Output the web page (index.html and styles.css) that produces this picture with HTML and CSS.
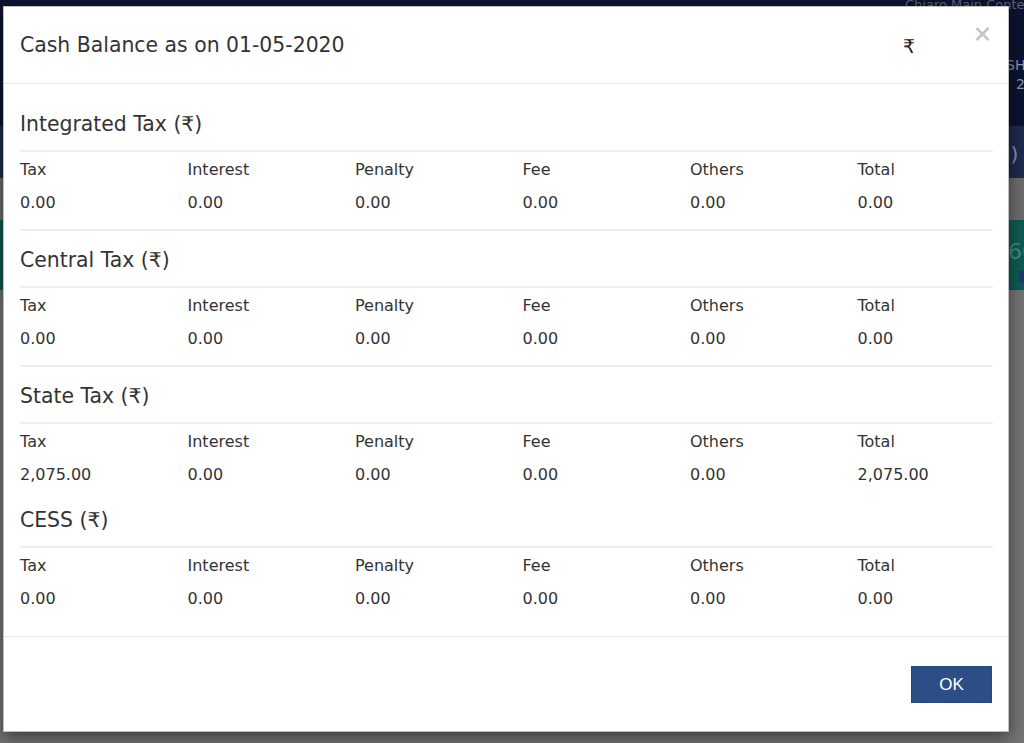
FILE: index.html
```html
<!DOCTYPE html>
<html>
<head>
<meta charset="utf-8">
<title>Cash Balance</title>
<link rel="stylesheet" href="styles.css">
</head>
<body>
<div class="page">
  <div class="bg-top">
    <div class="bg-line bg-faint">Chiaro Main Content</div>
    <div class="bg-line bg-sh">SHAH</div>
    <div class="bg-line bg-two">2020</div>
  </div>
  <div class="bg-band"><span class="bg-line bg-l">l)</span></div>
  <div class="bg-grey"></div>
  <div class="bg-teal"><span class="bg-line bg-six">60</span><span class="bg-chip"></span></div>
  <div class="bg-rest"></div>
</div>

<div class="modal">
  <div class="modal-header">
    <h4 class="modal-title">Cash Balance as on 01-05-2020</h4>
    <span class="rupee">₹</span>
    <button class="close" aria-label="Close">
      <svg width="15" height="14" viewBox="0 0 15 14"><path d="M1.5 1 L13.5 13 M13.5 1 L1.5 13" stroke="#c6c6c6" stroke-width="2.6" stroke-linecap="butt"/></svg>
    </button>
  </div>
  <div class="modal-body">
    <section class="tax">
      <h5 class="tax-title">Integrated Tax (₹)</h5>
      <div class="rule"></div>
      <div class="grid labels"><span>Tax</span><span>Interest</span><span>Penalty</span><span>Fee</span><span>Others</span><span>Total</span></div>
      <div class="grid values"><span>0.00</span><span>0.00</span><span>0.00</span><span>0.00</span><span>0.00</span><span>0.00</span></div>
      <div class="rule rule-end"></div>
    </section>
    <section class="tax">
      <h5 class="tax-title">Central Tax (₹)</h5>
      <div class="rule"></div>
      <div class="grid labels"><span>Tax</span><span>Interest</span><span>Penalty</span><span>Fee</span><span>Others</span><span>Total</span></div>
      <div class="grid values"><span>0.00</span><span>0.00</span><span>0.00</span><span>0.00</span><span>0.00</span><span>0.00</span></div>
      <div class="rule rule-end"></div>
    </section>
    <section class="tax tax-open">
      <h5 class="tax-title">State Tax (₹)</h5>
      <div class="rule"></div>
      <div class="grid labels"><span>Tax</span><span>Interest</span><span>Penalty</span><span>Fee</span><span>Others</span><span>Total</span></div>
      <div class="grid values"><span>2,075.00</span><span>0.00</span><span>0.00</span><span>0.00</span><span>0.00</span><span>2,075.00</span></div>
    </section>
    <section class="tax tax-last">
      <h5 class="tax-title">CESS (₹)</h5>
      <div class="rule"></div>
      <div class="grid labels"><span>Tax</span><span>Interest</span><span>Penalty</span><span>Fee</span><span>Others</span><span>Total</span></div>
      <div class="grid values"><span>0.00</span><span>0.00</span><span>0.00</span><span>0.00</span><span>0.00</span><span>0.00</span></div>
    </section>
  </div>
  <div class="modal-footer">
    <button class="btn-ok">OK</button>
  </div>
</div>
</body>
</html>
```

FILE: styles.css
```css
* { box-sizing: border-box; }
html, body { margin: 0; padding: 0; }
body {
  width: 1024px;
  height: 743px;
  overflow: hidden;
  background: #727272;
  font-family: "DejaVu Sans", Verdana, sans-serif;
  color: #333;
  position: relative;
}

/* background page (dimmed by overlay) */
.page { width: 1024px; }
.bg-top { height: 128px; background: #0c1330; }
.bg-band { height: 52px; background: #1d2b4b; padding-top: 18px; }
.bg-grey { height: 42px; background: #6c6c6c; }
.bg-teal { height: 70px; background: #0e5b54; padding-top: 20px; position: relative; }
.bg-rest { height: 451px; background: #747474; }
.bg-line { display: block; white-space: nowrap; overflow: hidden; }
.bg-faint { color: #5d6478; font-size: 13px; line-height: 14px; padding-left: 905px; margin-top: -2px; }
.bg-sh { color: #8d93a6; font-size: 14px; line-height: 16px; padding-left: 1006px; margin-top: 45px; }
.bg-two { color: #8d93a6; font-size: 14px; line-height: 16px; padding-left: 1016px; margin-top: 3px; }
.bg-l { color: #8a93aa; font-size: 20px; line-height: 20px; padding-left: 1005px; }
.bg-six { color: #3f8a83; font-size: 22px; line-height: 24px; padding-left: 1008px; }
.bg-chip { position: absolute; left: 1019px; top: 51px; width: 6px; height: 12px; background: #1e3a6e; }

/* modal */
.modal {
  position: absolute;
  left: 3px;
  top: 6px;
  width: 1006px;
  height: 726px;
  background: #fff;
  border: 1px solid rgba(0,0,0,0.25);
  box-shadow: 0 5px 15px rgba(0,0,0,0.5);
  display: flex;
  flex-direction: column;
}
.modal-header {
  height: 77px;
  border-bottom: 1px solid #e5e5e5;
  padding: 0 18px 0 16px;
  display: flex;
  align-items: center;
}
.modal-title {
  margin: 0;
  flex: 1;
  font-size: 20.4px;
  font-weight: normal;
  line-height: 24px;
  color: #333;
}
.rupee {
  font-size: 19px;
  line-height: 24px;
  color: #222;
  margin-right: 60px;
  margin-top: 1px;
}
.close {
  align-self: flex-start;
  margin-top: 20px;
  padding: 0;
  border: 0;
  background: none;
  width: 15px;
  height: 14px;
  line-height: 0;
}

.modal-body {
  flex: 1;
  padding: 28px 15px 0 16px;
}
.tax-title {
  margin: 0 0 14px;
  font-size: 20.4px;
  font-weight: normal;
  line-height: 24px;
  color: #333;
}
.rule { height: 2px; background: #efefef; }
.grid {
  display: grid;
  grid-template-columns: repeat(6, 167.5px);
  font-size: 16px;
  line-height: 20px;
  color: #333;
}
.labels { margin-top: 8px; }
.values { margin-top: 13px; }
.rule-end { margin-top: 16px; margin-bottom: 17px; }
.tax-open { margin-bottom: 23px; }

.modal-footer {
  height: 95px;
  border-top: 1px solid #e5e5e5;
  padding: 29px 16px 0 0;
  display: flex;
  justify-content: flex-end;
  align-items: flex-start;
}
.btn-ok {
  width: 81px;
  height: 37px;
  background: #2c4e86;
  border: 1px solid #27467a;
  color: #fff;
  font-family: "Liberation Sans", Arial, sans-serif;
  font-size: 17px;
  padding: 0;
  cursor: pointer;
}
```
